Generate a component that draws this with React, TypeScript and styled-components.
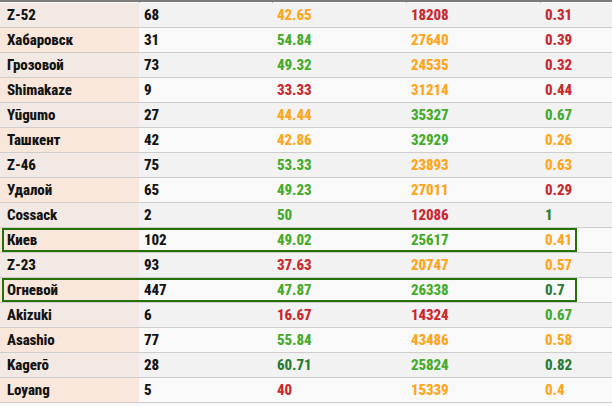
import * as React from 'react';
import styled, { createGlobalStyle } from 'styled-components';

const GlobalStyle = createGlobalStyle`
    html, body {
        margin: 0;
        padding: 0;
        background: #f9f9f9;
    }
    body {
        font-family: "Roboto", "DejaVu Sans", sans-serif;
        overflow: hidden;
    }
`;

type Tone = 'o' | 'g' | 'dg' | 'r';

const toneColor: Record<Tone, string> = {
    o: '#fda51b',
    g: '#46aa2c',
    dg: '#2b7a35',
    r: '#c8282f'
};

const Table = styled.div`
    width: 612px;
    display: flex;
    flex-direction: column;
`;

const HeaderLine = styled.div`
    display: grid;
    grid-template-columns: 139px 133px 134px 134px 1fr;
    height: 3px;
    border-top: 2px solid #7b7b7b;
    box-sizing: border-box;
`;

const HeaderTick = styled.div<{ $first?: boolean }>`
    border-left: ${p => (p.$first ? 'none' : '1px solid #b9b9b9')};
`;

const Row = styled.div<{ $odd: boolean; $picked?: boolean }>`
    position: relative;
    display: grid;
    grid-template-columns: 139px 133px 134px 134px 1fr;
    height: 25px;
    box-sizing: border-box;
    border-bottom: 1px solid #cdcdcd;
    background: ${p => (p.$odd ? '#f2f2f2' : '#f9f9f9')};

    &::after {
        content: '';
        display: ${p => (p.$picked ? 'block' : 'none')};
        position: absolute;
        left: 2px;
        top: 0;
        width: 575px;
        height: 24px;
        box-sizing: border-box;
        border: 2px solid #277009;
        pointer-events: none;
    }
`;

const NameCell = styled.div<{ $odd: boolean }>`
    display: flex;
    align-items: center;
    padding-left: 7px;
    background: ${p => (p.$odd ? '#f2e9e4' : '#f9e7dc')};
    color: #141414;
    font-weight: 800;
    font-size: 15px;
    font-stretch: 78%;
    letter-spacing: -0.1px;
`;

const Cell = styled.div<{ $tone?: Tone }>`
    display: flex;
    align-items: center;
    padding-left: 5px;
    color: ${p => (p.$tone ? toneColor[p.$tone] : '#141414')};
    font-weight: 800;
    font-size: 15px;
    font-stretch: 78%;
    letter-spacing: -0.1px;
`;

type Ship = {
    name: string;
    battles: string;
    win: [string, Tone];
    dmg: [string, Tone];
    kills: [string, Tone];
    picked?: boolean;
};

const ships: Ship[] = [
    { name: 'Z-52', battles: '68', win: ['42.65', 'o'], dmg: ['18208', 'r'], kills: ['0.31', 'r'] },
    { name: 'Хабаровск', battles: '31', win: ['54.84', 'g'], dmg: ['27640', 'o'], kills: ['0.39', 'r'] },
    { name: 'Грозовой', battles: '73', win: ['49.32', 'g'], dmg: ['24535', 'o'], kills: ['0.32', 'r'] },
    { name: 'Shimakaze', battles: '9', win: ['33.33', 'r'], dmg: ['31214', 'o'], kills: ['0.44', 'r'] },
    { name: 'Yūgumo', battles: '27', win: ['44.44', 'o'], dmg: ['35327', 'g'], kills: ['0.67', 'g'] },
    { name: 'Ташкент', battles: '42', win: ['42.86', 'o'], dmg: ['32929', 'g'], kills: ['0.26', 'o'] },
    { name: 'Z-46', battles: '75', win: ['53.33', 'g'], dmg: ['23893', 'o'], kills: ['0.63', 'o'] },
    { name: 'Удалой', battles: '65', win: ['49.23', 'g'], dmg: ['27011', 'o'], kills: ['0.29', 'r'] },
    { name: 'Cossack', battles: '2', win: ['50', 'g'], dmg: ['12086', 'r'], kills: ['1', 'dg'] },
    { name: 'Киев', battles: '102', win: ['49.02', 'g'], dmg: ['25617', 'g'], kills: ['0.41', 'o'], picked: true },
    { name: 'Z-23', battles: '93', win: ['37.63', 'r'], dmg: ['20747', 'o'], kills: ['0.57', 'o'] },
    { name: 'Огневой', battles: '447', win: ['47.87', 'g'], dmg: ['26338', 'g'], kills: ['0.7', 'dg'], picked: true },
    { name: 'Akizuki', battles: '6', win: ['16.67', 'r'], dmg: ['14324', 'r'], kills: ['0.67', 'g'] },
    { name: 'Asashio', battles: '77', win: ['55.84', 'g'], dmg: ['43486', 'o'], kills: ['0.58', 'o'] },
    { name: 'Kagerō', battles: '28', win: ['60.71', 'dg'], dmg: ['25824', 'g'], kills: ['0.82', 'dg'] },
    { name: 'Loyang', battles: '5', win: ['40', 'r'], dmg: ['15339', 'o'], kills: ['0.4', 'o'] }
];

const App = () => {
    return (
        <>
            <GlobalStyle />
            <Table>
                <HeaderLine>
                    <HeaderTick $first />
                    <HeaderTick />
                    <HeaderTick />
                    <HeaderTick />
                    <HeaderTick />
                </HeaderLine>
                {ships.map((s, i) => {
                    const odd = i % 2 === 0;
                    return (
                        <Row key={s.name} $odd={odd} $picked={s.picked}>
                            <NameCell $odd={odd}>{s.name}</NameCell>
                            <Cell>{s.battles}</Cell>
                            <Cell $tone={s.win[1]}>{s.win[0]}</Cell>
                            <Cell $tone={s.dmg[1]}>{s.dmg[0]}</Cell>
                            <Cell $tone={s.kills[1]}>{s.kills[0]}</Cell>
                        </Row>
                    );
                })}
            </Table>
        </>
    );
};

export default App;
